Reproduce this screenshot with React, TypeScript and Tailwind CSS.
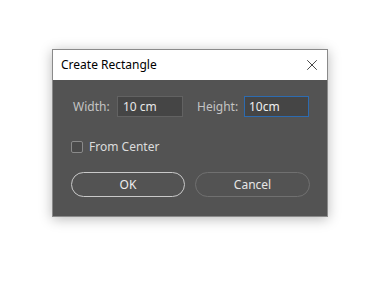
import { X } from "lucide-react";

export default function App() {
  return (
    <div
      className="w-[374px] h-[301px] bg-white pl-[52px] pt-[49px]"
      style={{ fontFamily: '"Noto Sans", "Open Sans", sans-serif' }}
    >
      <div className="w-[276px] h-[168px] border border-[#8a8a8a] flex flex-col shadow-[0_2px_12px_rgba(0,0,0,0.28)]">
        {/* Title bar */}
        <div className="h-[30px] bg-white flex items-center justify-between pl-[8px] pr-[6px]">
          <span className="text-[12px] text-black">Create Rectangle</span>
          <X className="w-[18px] h-[18px] text-[#222]" strokeWidth={1.1} />
        </div>

        {/* Body */}
        <div className="flex-1 bg-[#535353] flex flex-col pl-[20px] pt-[16px]">
          <div className="flex items-center text-[12px]">
            <span className="text-[#c4c4c4] w-[44px]">Width:</span>
            <input
              defaultValue="10 cm"
              className="w-[66px] h-[21px] bg-[#454545] border border-[#626262] px-[5px] text-[#e8e8e8] outline-none"
            />
            <span className="text-[#c4c4c4] ml-[14px] w-[47px]">Height:</span>
            <input
              defaultValue="10cm"
              className="w-[65px] h-[21px] bg-[#454545] border border-[#2d6bb0] px-[4px] text-[#f0f0f0] outline-none"
            />
          </div>

          <div className="flex items-center mt-[21px] -ml-[2px]">
            <span className="w-[12px] h-[12px] rounded-[2px] border border-[#8a8a8a] bg-[#4a4a4a]" />
            <span className="ml-[6px] text-[12px] text-[#dcdcdc]">From Center</span>
          </div>

          <div className="flex items-center mt-[16px] -ml-[2px] gap-[10px]">
            <button className="w-[114px] h-[25px] rounded-full border-[1.5px] border-[#c9c9c9] text-[12px] text-[#eeeeee]">
              OK
            </button>
            <button className="w-[115px] h-[25px] rounded-full border border-[#707070] text-[12px] text-[#e6e6e6]">
              Cancel
            </button>
          </div>
        </div>
      </div>
    </div>
  );
}
